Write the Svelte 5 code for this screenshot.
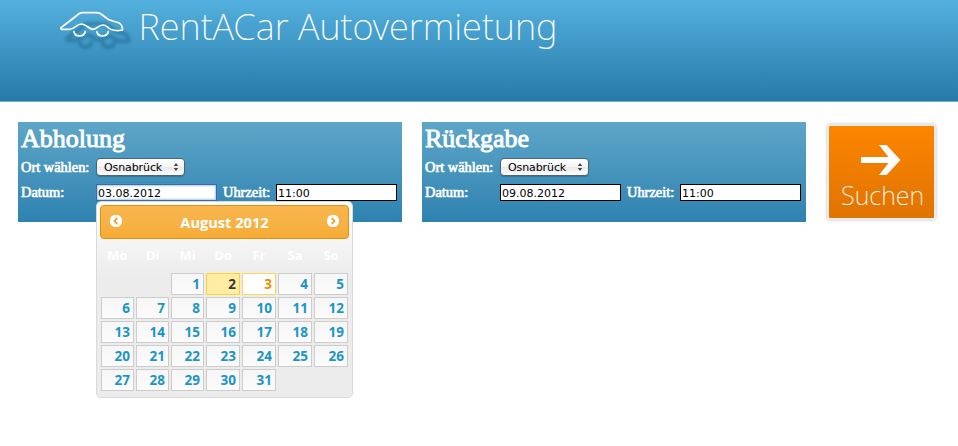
<script>
  const days = ['Mo', 'Di', 'Mi', 'Do', 'Fr', 'Sa', 'So'];
  const cells = [null, null, ...Array.from({ length: 31 }, (_, i) => i + 1)];
  const panels = [
    { title: 'Abholung', date: '03.08.2012', focused: true },
    { title: 'Rückgabe', date: '09.08.2012', focused: false }
  ];
</script>

{#snippet car()}
  <path d="M21.3 27.5 C23.5 25.5 35 17.2 38.5 14 Q40.5 12.7 43 12.7 H56 Q59 12.7 61 14 L68.5 19.5 Q72 21 78 22.5 Q82.5 24 82.5 30 Q76 31.3 71 29.5 C67.5 27.5 66.5 25 63 25 C58 25 57 29.3 53 29.3 C48.500 29.3 46.500 24 41.5 24 C36 24 35 29.5 29 29.3 H22 Q20 29.2 21.3 27.5Z" />
  <path d="M33.900 31.500 C35 37.500 44 37.500 45.300 31.500 M56.800 31.500 C58 37.500 67 37.500 68.300 31.500" />
{/snippet}

<div class="page">
  <header>
    <svg class="logo" width="600" height="60" viewBox="0 0 600 60">
      <g class="car shadow" transform="translate(46 11)">{@render car()}</g>
      <g class="car" transform="translate(40 0)">{@render car()}</g>
      <text x="138.500" y="40" textLength="419" lengthAdjust="spacingAndGlyphs">RentACar Autovermietung</text>
    </svg>
  </header>

  <main>
    {#each panels as p}
      <section>
        <h2>{p.title}</h2>
        <div class="row place">
          <span class="label">Ort wählen:</span>
          <button class="select">
            <span>Osnabrück</span>
            <svg width="6" height="8" viewBox="0 0 6 8"><path d="M3 0 5.200 3H.8zM3 8 .8 5h4.400z" fill="#444" /></svg>
          </button>
        </div>
        <div class="row when">
          <span class="label">Datum:</span>
          <div class="field">
            <input class:focused={p.focused} value={p.date} />
            {#if p.focused}
              <div class="picker">
                <div class="bar">
                  <svg width="12" height="12" viewBox="0 0 12 12"><circle cx="6" cy="6" r="6.200" fill="#fff" /><path d="M7.500 2.500V9.500H6.500L3.200 6 6.500 2.500zM6 5v2h1.500V5z" fill="#f2a02c" fill-rule="evenodd" /></svg>
                  <span>August 2012</span>
                  <svg width="12" height="12" viewBox="0 0 12 12"><circle cx="6" cy="6" r="6.200" fill="#fff" /><path d="M4.500 2.500V9.500H5.500L8.800 6 5.500 2.500zM6 5v2H4.500V5z" fill="#f2a02c" fill-rule="evenodd" /></svg>
                </div>
                <div class="grid names">
                  {#each days as d}<span>{d}</span>{/each}
                </div>
                <div class="grid dates">
                  {#each cells as c}
                    {#if c}
                      <span class="day" class:today={c === 2} class:chosen={c === 3}>{c}</span>
                    {:else}
                      <span></span>
                    {/if}
                  {/each}
                </div>
              </div>
            {/if}
          </div>
          <span class="label time">Uhrzeit:</span>
          <input value="11:00" />
        </div>
      </section>
    {/each}
    <button class="search">
      <svg width="105" height="92" viewBox="0 0 105 92">
        <path d="M32 31H59.500L50 19H57.500L71.500 34 57.500 49H50L59.500 37H32z" fill="#fff" />
        <text x="12" y="79" textLength="83" lengthAdjust="spacingAndGlyphs">Suchen</text>
      </svg>
    </button>
  </main>
</div>

<style>
  :global(body) { background: #fff; }
  .page { width: 958px; height: 446px; overflow: hidden; }
  header {
    box-sizing: border-box;
    height: 102px;
    background: linear-gradient(#54b0de, #267aa9);
    border-bottom: 1px solid #6eacca;
  }
  svg { display: block; }
  .logo text { font: 200 37.500px "Noto Sans", "Open Sans", sans-serif; fill: #fff; }
  .car { fill: none; stroke: #fff; stroke-width: 1.700; stroke-linejoin: round; stroke-linecap: round; }
  .shadow { stroke: #1e648a; stroke-width: 4; opacity: .5; filter: blur(1.600px); }
  main { display: flex; padding: 20px 0 0 18px; align-items: flex-start; }
  section {
    box-sizing: border-box;
    width: 384px;
    height: 100px;
    margin-right: 20px;
    padding-left: 3px;
    background: linear-gradient(#5ea6c8, #2e82b0);
    color: #fff;
  }
  h2 {
    margin: 0;
    height: 35px;
    font: 400 26px/34px "Liberation Serif", serif;
    -webkit-text-stroke: .9px #fff;
  }
  .row { display: flex; align-items: center; }
  .place { height: 20px; }
  .when { height: 18px; margin-top: 6px; }
  .label {
    width: 75px;
    font: 14.400px/18px "Liberation Serif", serif;
    -webkit-text-stroke: .65px #fff;
    white-space: nowrap;
  }
  .time { width: 47px; margin: 0 6px; }
  .select {
    box-sizing: border-box;
    display: flex;
    align-items: center;
    justify-content: space-between;
    width: 89px;
    height: 18px;
    padding: 0 5px 0 7px;
    border: 1px solid #4a6675;
    border-radius: 4px;
    background: linear-gradient(#fff, #f4f4f4 50%, #e8e8e8 51%, #fff);
    box-shadow: 0 1px 1px #0003;
    color: #000;
    font: 11px "DejaVu Sans", sans-serif;
    letter-spacing: -.1px;
  }
  input {
    display: block;
    box-sizing: border-box;
    width: 121px;
    height: 17px;
    margin: 0;
    padding: 2px 1px 0;
    border: 1px solid #000;
    border-radius: 0;
    background: #fff;
    color: #000;
    font: 11px "DejaVu Sans", sans-serif;
    outline: none;
  }
  .focused { border-color: #386d9f; box-shadow: inset 0 0 2px 1px #a3c9ec, 0 0 2px #4b8fc5; }
  .field { position: relative; width: 121px; }
  .picker {
    position: absolute;
    z-index: 2;
    top: 17px;
    left: 0;
    box-sizing: border-box;
    width: 257px;
    height: 197px;
    padding: 3px;
    border: 1px solid #d9d9d9;
    border-radius: 5px;
    background: linear-gradient(#fff, #ececec 75px);
    font: bold 13.500px "Open Sans", sans-serif;
  }
  .bar {
    box-sizing: border-box;
    display: flex;
    align-items: center;
    justify-content: space-between;
    width: 249px;
    height: 34px;
    padding: 0 9px;
    border: 1px solid #e78f08;
    border-radius: 4px;
    background: linear-gradient(#f8b54d, #f7b245 55%, #f6ab33);
    font-size: 14.600px;
  }
  .bar svg { position: relative; top: -1px; }
  .grid {
    display: grid;
    grid-template-columns: 33px 33px 33px 34px 34px 34px 34px;
    gap: 2px;
    padding-left: 1px;
  }
  .names { height: 34px; line-height: 32px; text-align: center; font-size: 13px; }
  .dates { grid-auto-rows: 22px; }
  .day {
    box-sizing: border-box;
    padding-right: 3px;
    border: 1px solid #ccc;
    background: linear-gradient(#f6f6f6, #fbfbfb);
    color: #1c94c4;
    text-align: right;
    line-height: 21px;
  }
  .today { border-color: #fed22f; background: #ffeda3; color: #363636; }
  .chosen { border-color: #fbd850; background: #fff; color: #eb8f00; }
  .search {
    display: block;
    width: 109px;
    height: 96px;
    margin: 2px 0 0 1px;
    padding: 0;
    border: 2px solid #eeebe6;
    border-radius: 3px;
    background: linear-gradient(#fc8500, #e07400);
    box-shadow: 0 0 3px #bbb;
  }
  .search text { font: 200 26px "Noto Sans", "Open Sans", sans-serif; fill: #fff; }
</style>
